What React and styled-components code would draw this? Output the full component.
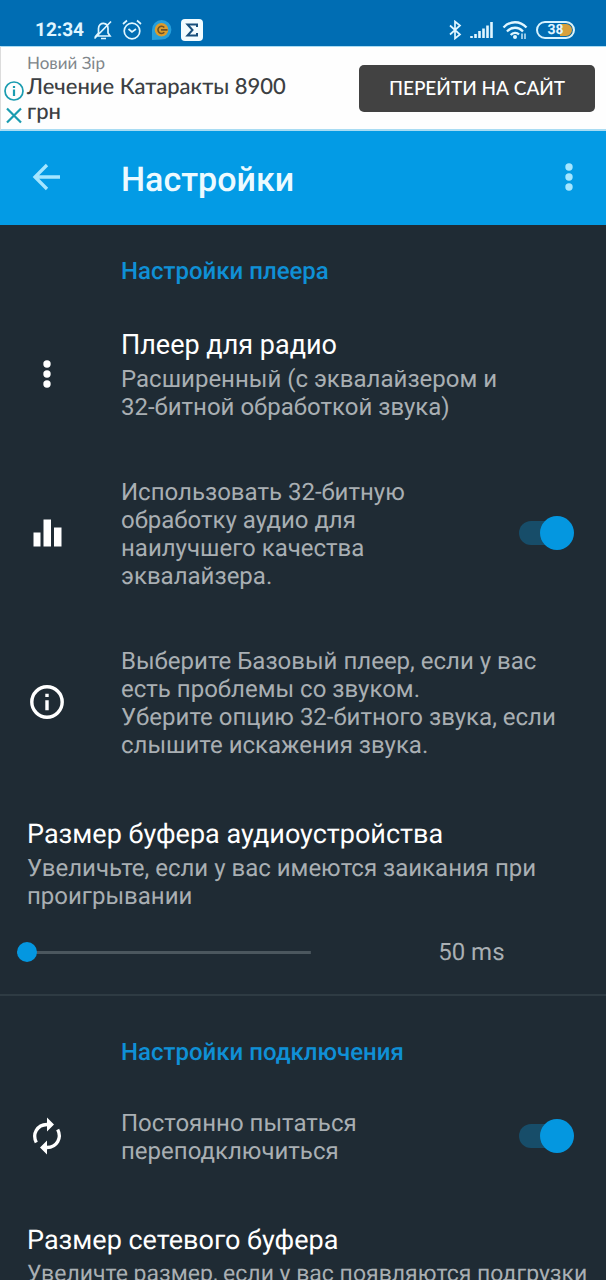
import React, { useState } from "react";
import styled, { createGlobalStyle } from "styled-components";

const GlobalStyle = createGlobalStyle`
  *, *::before, *::after { box-sizing: border-box; }
  html { scrollbar-width: none; }
  body {
    margin: 0;
    background: #1f2b34;
    font-family: Roboto, "Liberation Sans", sans-serif;
    text-rendering: geometricPrecision;
  }
  h1, h2, h3, p { margin: 0; font-weight: 400; }
  button { border: 0; padding: 0; margin: 0; background: none; color: inherit; font: inherit; cursor: pointer; }
`;

const Screen = styled.div`
  display: flex;
  flex-direction: column;
  height: 100vh;
  overflow: hidden;
  color: #ffffff;
`;

const StatusBar = styled.div`
  flex: none;
  display: flex;
  align-items: center;
  justify-content: space-between;
  height: 46px;
  padding: 13px 31px 0 35px;
  background: #006db3;
  color: #e0f6ff;
`;

const StatusGroup = styled.div`
  display: flex;
  align-items: center;
  gap: ${(p) => p.$gap}px;
`;

const Clock = styled.span`
  font-size: 19px;
  line-height: 24px;
  font-weight: 700;
`;

const Battery = styled.span`
  display: flex;
  align-items: center;
  justify-content: center;
  width: 39px;
  height: 18px;
  border: 2px solid #d6f3ff;
  border-radius: 9px;
  box-shadow: inset 0 0 0 1px #006db3;
  background: linear-gradient(to right, transparent 22px, #d9a13c 22px);
  font-size: 14px;
  line-height: 14px;
  font-weight: 700;
`;

const Ad = styled.aside`
  flex: none;
  display: flex;
  align-items: center;
  height: 85px;
  padding: 0 11px 0 3px;
  background: #fefefe;
  border-top: 1px solid #a9dcf3;
  border-bottom: 2px solid #a9dcf3;
  border-left: 1px solid #dcdcdc;
  color: #3c4043;
  font-family: Lato, Roboto, sans-serif;
`;

const AdControls = styled.div`
  display: flex;
  flex-direction: column;
  gap: 4px;
  margin-right: 3px;
  padding-top: 30px;
  color: #1a9cb0;

  button, svg { display: block; }
`;

const AdText = styled.div`
  flex: 1;
  min-width: 0;
  padding-right: 60px;
`;

const Advertiser = styled.p`
  color: #80868b;
  font-size: 17px;
  line-height: 20px;
`;

const AdHeadline = styled.p`
  font-size: 22px;
  line-height: 25px;
  font-weight: 500;
`;

const AdButton = styled.button`
  && {
    flex: none;
    width: 236px;
    height: 47px;
    border-radius: 5px;
    background: #424242;
    color: #ffffff;
    font-size: 19px;
    line-height: 24px;
    font-weight: 500;
  }
`;

const AppBar = styled.header`
  flex: none;
  display: flex;
  align-items: center;
  height: 94px;
  padding: 0 17px 2px 27px;
  background: #039be5;
`;

const AppTitle = styled.h1`
  flex: 1;
  margin-left: 54px;
  padding-top: 5px;
  color: #ecfaff;
  font-size: 34px;
  line-height: 40px;
  font-weight: 500;
`;

const IconButton = styled.button`
  && {
    width: 40px;
    height: 40px;
    color: #a5e6ff;
  }
  svg { display: block; }
`;

const Settings = styled.main`
  flex: 1;
  min-height: 0;
  overflow-y: auto;
  scrollbar-width: none;
`;

const Group = styled.section`
  & + & {
    padding-top: 10px;
    border-top: 2px solid #2e3b43;
  }
`;

const GroupTitle = styled.h2`
  && {
    padding: 32px 27px 13px 121px;
    color: #0f90d6;
    font-size: 24px;
    line-height: 28px;
    font-weight: 500;
  }
`;

const Row = styled.div`
  && {
    display: flex;
    align-items: center;
    gap: 40px;
    width: 100%;
    padding: 28px 32px 27px 27px;
    text-align: left;
  }
`;

const RowIcon = styled.span`
  flex: none;
  width: 40px;
  height: 40px;
  margin-right: 14px;
  svg { display: block; }
`;

const RowText = styled.span`
  flex: 1;
  min-width: 0;
  padding-top: 2px;
`;

const Title = styled.span`
  display: block;
  margin-bottom: 3px;
  font-size: 27px;
  line-height: 34px;
`;

const Summary = styled.span`
  display: block;
  color: #a9afb3;
  font-size: ${(p) => (p.$compact ? 23 : 24)}px;
  line-height: 28px;
  white-space: pre-line;
`;

const NoBreak = styled.span`
  white-space: nowrap;
`;

const Block = styled.div`
  display: block;
  padding: 31px 0 0 27px;
`;

const Switch = styled.input`
  flex: none;
  appearance: none;
  position: relative;
  width: 55px;
  height: 34px;
  margin: 0;

  &::before {
    content: "";
    position: absolute;
    inset: 5px 9px 5px 0;
    border-radius: 12px;
    background: #174d69;
  }
  &::after {
    content: "";
    position: absolute;
    top: 0;
    left: 0;
    width: 34px;
    height: 34px;
    border-radius: 50%;
    background: #b9bfc3;
  }
  &:checked::after { left: 21px; background: #0497e0; }
`;

const SliderRow = styled.div`
  display: grid;
  grid-template-columns: 5fr 4fr;
  align-items: center;
  padding: 28px 0;
`;

const Slider = styled.input`
  appearance: none;
  height: 28px;
  margin: 0 26px 0 17px;
  background: linear-gradient(#4b575e, #4b575e) center / 100% 3px no-repeat;

  &::-webkit-slider-thumb {
    appearance: none;
    width: 20px;
    height: 20px;
    border-radius: 50%;
    background: #0497e0;
  }
`;

const SliderValue = styled.output`
  color: #a9afb3;
  font-size: 24px;
  line-height: 28px;
  text-align: center;
`;

const Svg = ({ w = 40, h = 40, children }) => (
  <svg width={w} height={h} viewBox={`0 0 ${w} ${h}`} fill="none" stroke="currentColor" aria-hidden="true">
    {children}
  </svg>
);

const Dots = () => (
  <Svg>
    <g fill="currentColor" stroke="none">
      <circle cx="20" cy="10" r="3.7" />
      <circle cx="20" cy="20" r="3.7" />
      <circle cx="20" cy="30" r="3.7" />
    </g>
  </Svg>
);

const BackArrow = () => (
  <Svg>
    <path d="M33 20H8M20 8L8 20L20 32" strokeWidth="3.300" />
  </Svg>
);

const Bars = () => (
  <Svg>
    <path d="M6.500 19.500h7v14h-7zM16.500 6.500h7.500v27h-7.500zM27 14.500h7.500v19h-7.500z" fill="currentColor" stroke="none" />
  </Svg>
);

const Info = () => (
  <Svg>
    <circle cx="20" cy="20" r="15.200" strokeWidth="3.400" />
    <path d="M18.300 11.700h3.400v3.400h-3.400zM18.300 18.300h3.400v10h-3.400z" fill="currentColor" stroke="none" />
  </Svg>
);

const Sync = () => (
  <Svg>
    <path d="M9.300 26.500C5 18 10 8.800 20 8.500M30.700 13.500C35 22 30 31.200 20 31.500" strokeWidth="3.300" />
    <path d="M20 1.500v14l7-7zM20 38.500v-14l-7 7z" fill="currentColor" stroke="none" />
  </Svg>
);

const BellOff = () => (
  <Svg w={20} h={22}>
    <path d="M3 17h14l-2-3V9.500C15 6.500 13 4.500 10.500 4.300C8 4.200 5.500 6 5.500 9.500V14zM1.500 19.500L18 2.500M8 19.500h5" strokeWidth="1.700" />
  </Svg>
);

const Alarm = () => (
  <Svg w={20} h={22}>
    <circle cx="10" cy="12" r="7.800" strokeWidth="1.700" />
    <path d="M6.500 10l3.500 3l4-3M1 5l4-3.500M19 5l-4-3.500" strokeWidth="1.700" />
  </Svg>
);

const ChatApp = () => (
  <Svg w={21} h={22}>
    <path d="M1 21V11A9.700 9.700 0 1 1 10.700 20.500z" fill="#269fdb" stroke="none" />
    <circle cx="10.500" cy="10.800" r="6.800" fill="#dc9c2c" stroke="none" />
    <path d="M13.300 8.500A3.600 3.600 0 1 0 13.300 13.200M10 10.900h6.500" stroke="#69512a" strokeWidth="1.600" />
  </Svg>
);

const SigmaApp = () => (
  <Svg w={22} h={22}>
    <rect width="22" height="22" rx="4" fill="#f2fcff" stroke="none" />
    <path d="M16 8V5.500H6.500L11.500 11L6.500 16.500H16V14" stroke="#174f7c" strokeWidth="2" />
  </Svg>
);

const Bluetooth = () => (
  <Svg w={14} h={20}>
    <path d="M2 5.500l10 9L7 18.500v-17l5 4l-10 9" strokeWidth="1.700" />
  </Svg>
);

const Signal = () => (
  <Svg w={24} h={18}>
    <path d="M1.500 17v-2M5.500 17v-4M9.500 17v-7M13.500 17V7.500M17.500 17V4.500M21.500 17V1" strokeWidth="2.600" />
  </Svg>
);

const Wifi = () => (
  <Svg w={26} h={20}>
    <path d="M1.500 7.500C8 0.500 18 0.500 24.500 7.500M5 11.500C9.500 6.500 16.500 6.500 21 11.500M8.700 15C11 12.300 15 12.300 17 14.500" strokeWidth="2.300" />
    <circle cx="13" cy="17" r="2" fill="currentColor" stroke="none" />
    <path d="M20 13.500v5.500M23 13.500v5.500" strokeWidth="1.300" />
  </Svg>
);

const AdInfo = () => (
  <Svg w={20} h={20}>
    <circle cx="10" cy="10" r="9" strokeWidth="1.700" />
    <path d="M10 8.500V15M10 5v2" strokeWidth="2.200" />
  </Svg>
);

const AdClose = () => (
  <Svg w={20} h={20}>
    <path d="M3 3.500l14 14M17 3.500l-14 14" strokeWidth="2.200" />
  </Svg>
);

function RowIconText({ icon, children }) {
  return (
    <>
      <RowIcon>{icon}</RowIcon>
      <RowText>{children}</RowText>
    </>
  );
}

function SwitchRow({ icon, children }) {
  const [on, setOn] = useState(true);
  return (
    <Row as="label">
      <RowIconText icon={icon}>
        <Summary>{children}</Summary>
      </RowIconText>
      <Switch type="checkbox" role="switch" checked={on} onChange={(e) => setOn(e.target.checked)} />
    </Row>
  );
}

export default function App() {
  const [buffer, setBuffer] = useState(50);
  return (
    <Screen>
      <GlobalStyle />
      <StatusBar>
        <StatusGroup $gap={9}>
          <Clock>12:34</Clock>
          <BellOff />
          <Alarm />
          <ChatApp />
          <SigmaApp />
        </StatusGroup>
        <StatusGroup $gap={8}>
          <Bluetooth />
          <Signal />
          <Wifi />
          <Battery>38</Battery>
        </StatusGroup>
      </StatusBar>

      <Ad>
        <AdControls>
          <button type="button" aria-label="Информация о рекламе"><AdInfo /></button>
          <button type="button" aria-label="Закрыть рекламу"><AdClose /></button>
        </AdControls>
        <AdText>
          <Advertiser>Новий Зір</Advertiser>
          <AdHeadline>Лечение Катаракты 8900 грн</AdHeadline>
        </AdText>
        <AdButton type="button">ПЕРЕЙТИ НА САЙТ</AdButton>
      </Ad>

      <AppBar>
        <IconButton type="button" aria-label="Назад"><BackArrow /></IconButton>
        <AppTitle>Настройки</AppTitle>
        <IconButton type="button" aria-label="Меню"><Dots /></IconButton>
      </AppBar>

      <Settings>
        <Group>
          <GroupTitle>Настройки плеера</GroupTitle>
          <Row as="button" type="button">
            <RowIconText icon={<Dots />}>
              <Title>Плеер для радио</Title>
              <Summary>
                Расширенный (с эквалайзером и <NoBreak>32-битной</NoBreak> обработкой звука)
              </Summary>
            </RowIconText>
          </Row>
          <SwitchRow icon={<Bars />}>
            Использовать 32-битную обработку аудио для наилучшего качества эквалайзера.
          </SwitchRow>
          <Row>
            <RowIconText icon={<Info />}>
              <Summary>
                {"Выберите Базовый плеер, если у вас есть проблемы со звуком.\nУберите опцию 32-битного звука, если слышите искажения звука."}
              </Summary>
            </RowIconText>
          </Row>
          <Block as="label" htmlFor="device-buffer">
            <Title>Размер буфера аудиоустройства</Title>
            <Summary>Увеличьте, если у вас имеются заикания при проигрывании</Summary>
          </Block>
          <SliderRow>
            <Slider
              id="device-buffer"
              type="range"
              min="50"
              max="1000"
              step="10"
              value={buffer}
              onChange={(e) => setBuffer(Number(e.target.value))}
            />
            <SliderValue htmlFor="device-buffer">{buffer} ms</SliderValue>
          </SliderRow>
        </Group>

        <Group>
          <GroupTitle>Настройки подключения</GroupTitle>
          <SwitchRow icon={<Sync />}>Постоянно пытаться переподключиться</SwitchRow>
          <Block>
            <Title>Размер сетевого буфера</Title>
            <Summary $compact>Увеличте размер, если у вас появляются подгрузки</Summary>
          </Block>
        </Group>
      </Settings>
    </Screen>
  );
}
